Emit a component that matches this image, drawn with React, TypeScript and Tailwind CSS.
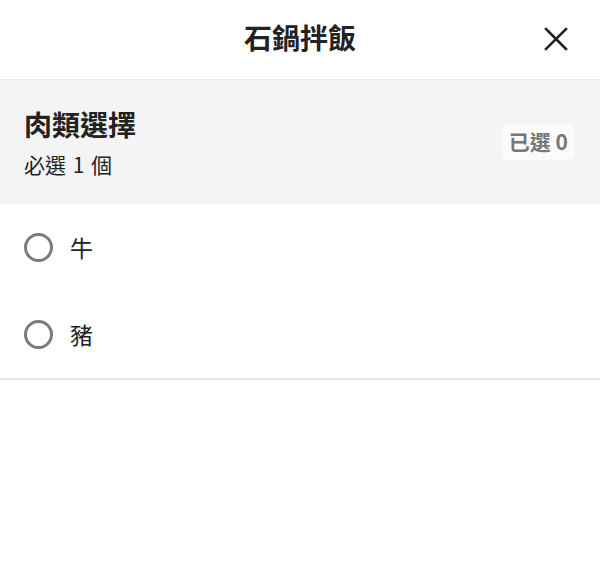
import React from 'react';

const options = ['牛', '豬'];

const App = () => {
  return (
    <div
      className="w-[600px] h-[561px] bg-white text-[#222]"
      style={{ fontFamily: '"Noto Sans CJK TC", "Noto Sans", sans-serif' }}
    >
      <header className="relative h-[80px] flex items-center justify-center pb-[6px] border-b border-[#ececec]">
        <h1 className="text-[28px] font-bold leading-none text-[#222]">石鍋拌飯</h1>
        <button className="absolute right-[32px] top-[27px] w-[24px] h-[24px]">
          <svg viewBox="0 0 24 24" width="24" height="24" fill="none" stroke="#222" strokeWidth="2.6" strokeLinecap="square">
            <path d="M2 2L22 22M22 2L2 22" />
          </svg>
        </button>
      </header>

      <div className="bg-[#f4f4f4] h-[124px] flex items-center justify-between pl-[24px] pr-[25px]">
        <div className="flex flex-col">
          <h2 className="text-[28px] font-bold leading-none text-[#222]">肉類選擇</h2>
          <p className="mt-[16px] text-[21px] leading-none text-[#222] [word-spacing:2px]">必選 1 個</p>
        </div>
        <span className="bg-[#fbfbfb] rounded-[6px] px-[7px] h-[36px] flex items-center text-[21px] font-bold text-[#777]">
          已選 0
        </span>
      </div>

      <ul className="border-b-2 border-[#e6e6e6]">
        {options.map((o) => (
          <li key={o} className="h-[87px] flex items-center pl-[24px]">
            <span className="w-[29px] h-[29px] rounded-full border-[3px] border-[#7b7b7b]" />
            <span className="ml-[17px] text-[23px] leading-none text-[#222]">{o}</span>
          </li>
        ))}
      </ul>
    </div>
  );
};

export default App;
